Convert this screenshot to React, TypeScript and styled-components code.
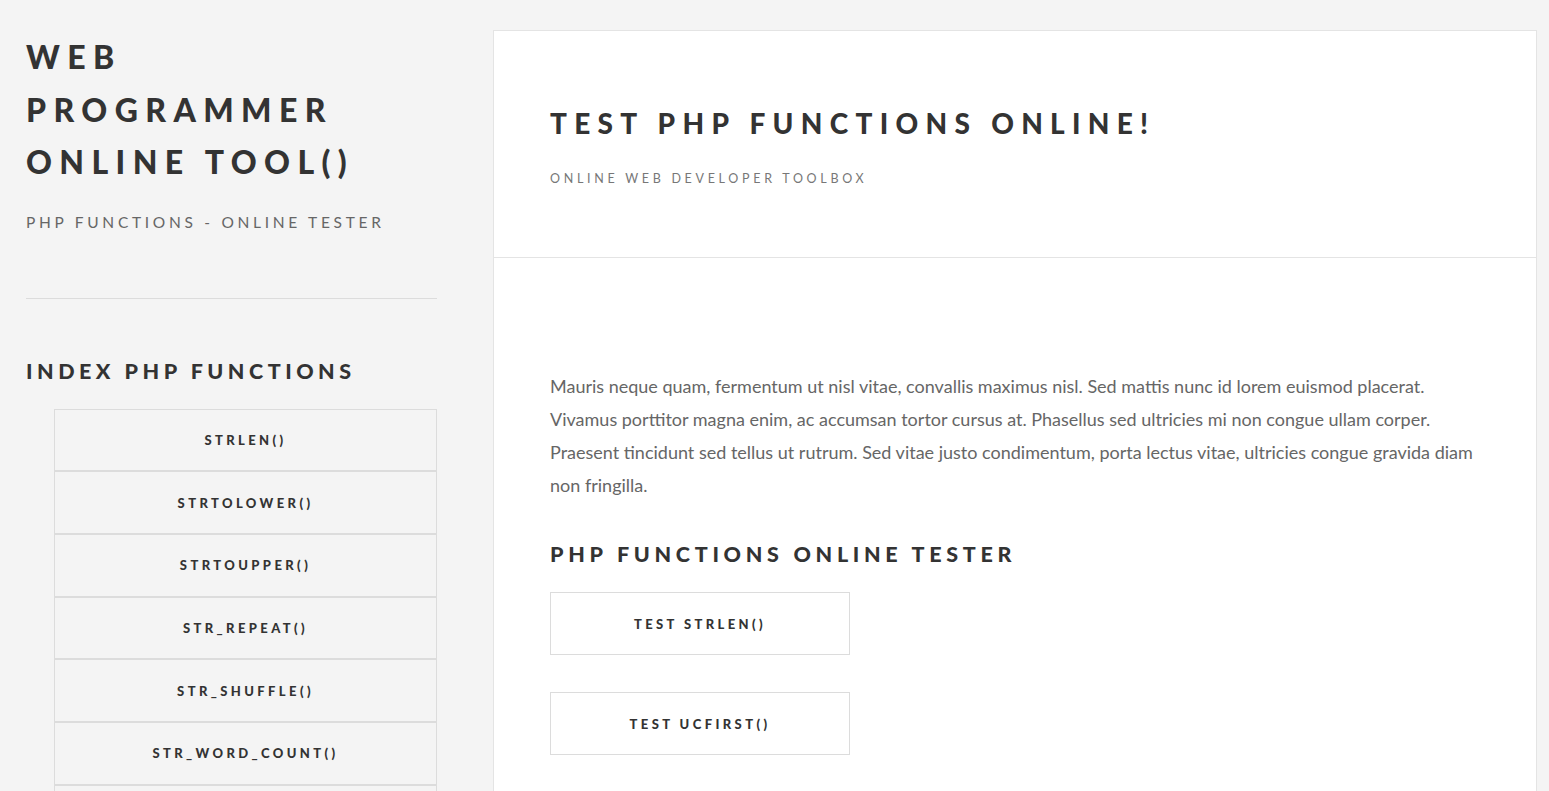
import styled, { createGlobalStyle } from 'styled-components';

const GlobalStyle = createGlobalStyle`
	html, body {
		margin: 0;
		padding: 0;
		background: #f4f4f4;
	}
	body {
		font-family: 'Lato', 'Open Sans', sans-serif;
		color: #333;
	}
	* {
		box-sizing: border-box;
	}
`;

const heading = `
	font-family: 'Lato', 'Open Sans', sans-serif;
	font-weight: 900;
	text-transform: uppercase;
	color: #333;
	margin: 0;
`;

const Page = styled.div`
	display: flex;
	align-items: flex-start;
	padding: 30px 12px 0 26px;
	gap: 56px;
	height: 100vh;
	overflow: hidden;
`;

const Sidebar = styled.aside`
	width: 411px;
	flex-shrink: 0;
	display: flex;
	flex-direction: column;
`;

const SiteTitle = styled.h1`
	${heading}
	font-size: 32px;
	line-height: 52.5px;
	letter-spacing: 7.4px;
	margin-top: 1px;
	width: 360px;
`;

const SiteTagline = styled.p`
	margin: 24px 0 0;
	font-size: 15.5px;
	letter-spacing: 3.7px;
	color: #666;
	text-transform: uppercase;
`;

const Divider = styled.hr`
	border: 0;
	border-top: 1px solid #dcdcdc;
	margin: 67px 0 0;
`;

const SideHeading = styled.h2`
	${heading}
	font-size: 21.5px;
	letter-spacing: 4.5px;
	margin-top: 59px;
`;

const NavList = styled.ul`
	list-style: none;
	margin: 25px 0 0 28px;
	padding: 0;
`;

const NavItem = styled.li`
	height: 62.7px;
	border: 1px solid #dcdcdc;
	display: flex;
	align-items: center;
	justify-content: center;
	font-weight: 900;
	font-size: 13px;
	letter-spacing: 3.4px;
	text-transform: uppercase;
	color: #333;
`;

const MainPanel = styled.main`
	flex: 1;
	background: #fff;
	border: 1px solid #e4e4e4;
	border-bottom: 0;
	min-height: 800px;
`;

const PanelHeader = styled.header`
	height: 227px;
	border-bottom: 1px solid #e4e4e4;
	padding: 74px 56px 0;
`;

const PageTitle = styled.h2`
	${heading}
	font-size: 28px;
	line-height: 36px;
	letter-spacing: 7.3px;
`;

const PageSubtitle = styled.p`
	margin: 30px 0 0;
	font-size: 12.5px;
	letter-spacing: 3.7px;
	color: #777;
	text-transform: uppercase;
`;

const PanelBody = styled.section`
	padding: 112px 56px 0;
`;

const Text = styled.p`
	margin: 0;
	font-size: 18px;
	line-height: 33px;
	color: #666;
	white-space: nowrap;
`;

const SectionHeading = styled.h3`
	${heading}
	font-size: 21.5px;
	letter-spacing: 4.7px;
	margin-top: 39px;
`;

const ButtonList = styled.div`
	display: flex;
	flex-direction: column;
	gap: 37px;
	margin-top: 25px;
`;

const TestButton = styled.button`
	width: 300px;
	height: 63px;
	background: #fff;
	border: 1px solid #dcdcdc;
	font-family: 'Lato', sans-serif;
	font-weight: 900;
	font-size: 13px;
	letter-spacing: 3.4px;
	text-transform: uppercase;
	color: #333;
	cursor: pointer;
`;

const functions = ['strlen()', 'strtolower()', 'strtoupper()', 'str_repeat()', 'str_shuffle()', 'str_word_count()', 'ucfirst()'];

const App = () => (
	<>
		<GlobalStyle />
		<Page>
			<Sidebar>
				<SiteTitle>Web Programmer Online Tool()</SiteTitle>
				<SiteTagline>PHP Functions - Online Tester</SiteTagline>
				<Divider />
				<SideHeading>Index PHP Functions</SideHeading>
				<NavList>
					{functions.map(name => (
						<NavItem key={name}>{name}</NavItem>
					))}
				</NavList>
			</Sidebar>
			<MainPanel>
				<PanelHeader>
					<PageTitle>Test PHP Functions Online!</PageTitle>
					<PageSubtitle>Online Web Developer Toolbox</PageSubtitle>
				</PanelHeader>
				<PanelBody>
					<Text>
						Mauris neque quam, fermentum ut nisl vitae, convallis maximus nisl. Sed mattis nunc id lorem euismod placerat.
						<br />
						Vivamus porttitor magna enim, ac accumsan tortor cursus at. Phasellus sed ultricies mi non congue ullam corper.
						<br />
						Praesent tincidunt sed tellus ut rutrum. Sed vitae justo condimentum, porta lectus vitae, ultricies congue gravida diam
						<br />
						non fringilla.
					</Text>
					<SectionHeading>PHP Functions Online Tester</SectionHeading>
					<ButtonList>
						<TestButton>Test strlen()</TestButton>
						<TestButton>Test ucfirst()</TestButton>
					</ButtonList>
				</PanelBody>
			</MainPanel>
		</Page>
	</>
);

export default App;
